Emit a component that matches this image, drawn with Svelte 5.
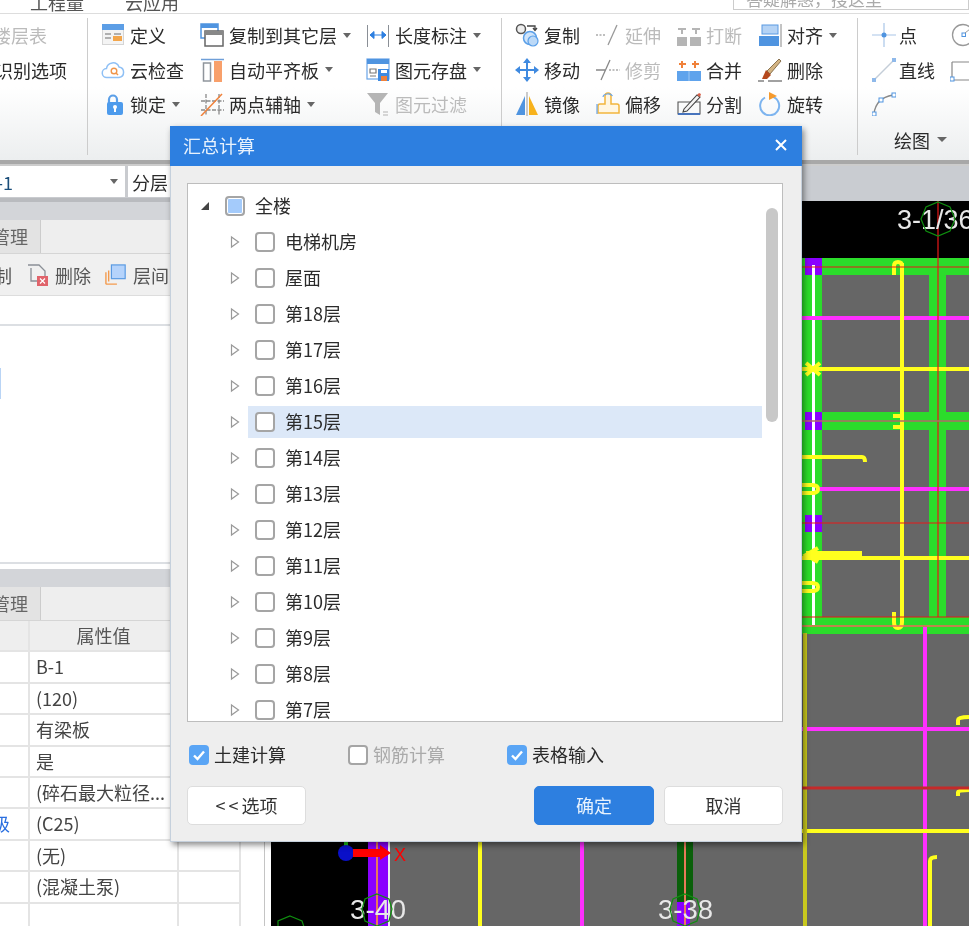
<script>
  const floors = ['电梯机房', '屋面']
  for (let i = 18; i >= 7; i--) floors.push(`第${i}层`)

  const rows = [
    ['', 'B-1'],
    ['', '(120)'],
    ['', '有梁板'],
    ['', '是'],
    ['', '(碎石最大粒径...'],
    ['级', '(C25)'],
    ['', '(无)'],
    ['', '(混凝土泵)'],
    ['', '']
  ]
</script>

{#snippet tick()}
  <svg viewBox="0 0 20 20" width="20" height="20"><path d="M5 10.5l3.5 3.5L15 6.5" fill="none" stroke="#fff" stroke-width="2.4"/></svg>
{/snippet}

<div class="page">
  <div class="menubar">
    <span class="m1">工程量</span>
    <span class="m2">云应用</span>
    <div class="search">答疑解惑，搜这里</div>
  </div>

  <div class="ribbon">
    <div class="group g1">
      <div class="clip off r1">楼层表</div>
      <div class="clip r2">识别选项</div>
    </div>

    <div class="group g2">
      <div class="item">
        <svg viewBox="0 0 24 24"><rect x="1.5" y="1.5" width="21" height="20" fill="#f4f4f4" stroke="#d5d5d5"/><rect x="1" y="1" width="22" height="6" fill="#5c9ee6"/><path d="M4 11h6M4 15h6M13 11h7" stroke="#999" stroke-width="1.5"/><rect x="12" y="13" width="9" height="5" fill="#f3a64c"/></svg>
        <span>定义</span>
      </div>
      <div class="item">
        <svg viewBox="0 0 24 24"><rect x="1" y="1" width="17" height="4" fill="#4f94e0"/><rect x="1" y="1" width="17" height="14" fill="none" stroke="#4f94e0" stroke-width="1.5"/><rect x="5" y="8" width="18" height="15" fill="#fff" stroke="#666" stroke-width="1.5"/><rect x="5" y="8" width="18" height="4" fill="#888"/></svg>
        <span>复制到其它层</span><i class="caret"></i>
      </div>
      <div class="item">
        <svg viewBox="0 0 24 24"><path d="M1.5 2v22M22.500 2v22" stroke="#8a8f96"/><path d="M4 12h16M4 12l4-3.500v7zM20 12l-4-3.500v7z" fill="#2d7fe0" stroke="#2d7fe0"/></svg>
        <span>长度标注</span><i class="caret"></i>
      </div>

      <div class="item">
        <svg viewBox="0 0 24 24"><path d="M6 19.500a4.500 4.500 0 0 1-.5-9A6.500 6.500 0 0 1 18 9a5.300 5.300 0 0 1 0 10.500z" fill="#fff" stroke="#8fc0f5" stroke-width="1.500"/><circle cx="13" cy="13" r="2.800" fill="none" stroke="#f0954a" stroke-width="1.400"/><path d="M15 15l2 2" stroke="#f0954a" stroke-width="1.400"/></svg>
        <span>云检查</span>
      </div>
      <div class="item">
        <svg viewBox="0 0 24 24"><path d="M1 1.500h23" stroke="#6f9fd8" stroke-width="1.500"/><rect x="3.500" y="5" width="7" height="18" fill="#fff" stroke="#8f959c" stroke-width="1.500"/><rect x="14" y="3" width="8" height="21" fill="#f8a06b"/></svg>
        <span>自动平齐板</span><i class="caret"></i>
      </div>
      <div class="item">
        <svg viewBox="0 0 24 24"><rect x="1" y="1" width="22" height="20" fill="#fff" stroke="#6aa5e8" stroke-width="1.200"/><rect x="1" y="1" width="22" height="5" fill="#4f94e0"/><path d="M4 11h6v4H4zM4 18h6" fill="none" stroke="#777" stroke-width="1.200"/><rect x="12" y="11" width="11" height="12" fill="#3f8ae0"/><rect x="15" y="18" width="6" height="5" fill="#f0813a"/><rect x="15" y="12" width="6" height="3" fill="#fff"/></svg>
        <span>图元存盘</span><i class="caret"></i>
      </div>

      <div class="item">
        <svg viewBox="0 0 24 24"><path d="M9 11V7.500a4 4 0 0 1 8 0V11" fill="none" stroke="#5b9fe8" stroke-width="2.200" transform="translate(-1 0)"/><rect x="6" y="10" width="16" height="13" rx="2" fill="#4d9bec"/><circle cx="14" cy="15" r="2" fill="#fff"/><rect x="13" y="15" width="2" height="5" fill="#fff"/></svg>
        <span>锁定</span><i class="caret"></i>
      </div>
      <div class="item">
        <svg viewBox="0 0 24 24"><path d="M6 2v22M19 2v22M1 9h23M1 18h23" stroke="#8a8a8a" stroke-width="1.300" stroke-dasharray="4 1.500"/><path d="M1 24L22 2" stroke="#f0813a" stroke-width="1.500"/></svg>
        <span>两点辅轴</span><i class="caret"></i>
      </div>
      <div class="item off">
        <svg viewBox="0 0 24 24"><path d="M1 1h21l-8 10v12l-5-3v-9z" fill="#b5b5b5"/><path d="M17 20h5M17 23h5" stroke="#c9c9c9" stroke-width="1.500"/></svg>
        <span>图元过滤</span>
      </div>
    </div>

    <div class="group g3">
      <div class="item">
        <svg viewBox="0 0 24 24"><circle cx="6" cy="6" r="4.500" fill="#eee" stroke="#555" stroke-width="1.500"/><circle cx="15" cy="15" r="6.500" fill="#cfe4fa" stroke="#5a9fe8" stroke-width="1.500"/><circle cx="18" cy="18" r="5" fill="#bcd9f7" stroke="#5a9fe8" stroke-width="1.200"/><path d="M12 3h8v4M18 5l2 2.500L22 5" fill="none" stroke="#444" stroke-width="1.300"/></svg>
        <span>复制</span>
      </div>
      <div class="item off">
        <svg viewBox="0 0 24 24"><path d="M0 12h10" stroke="#aaa" stroke-width="1.300" stroke-dasharray="2 1.500"/><path d="M12 22L21 2" stroke="#999" stroke-width="1.300"/></svg>
        <span>延伸</span>
      </div>
      <div class="item off">
        <svg viewBox="0 0 24 24"><rect x="0" y="14" width="10" height="9" fill="#b5b5b5"/><rect x="13" y="14" width="11" height="9" fill="#b5b5b5"/><path d="M5 5v6M19 5v6M1 6h8M15 6h8" stroke="#b5b5b5" stroke-width="2"/></svg>
        <span>打断</span>
      </div>
      <div class="item">
        <svg viewBox="0 0 24 24"><rect x="4" y="2" width="16" height="9" fill="#b5d3f5" stroke="#5a9ae2"/><rect x="1" y="13" width="20" height="10" fill="#4f94e0"/><path d="M23 1v23" stroke="#888"/></svg>
        <span>对齐</span><i class="caret"></i>
      </div>

      <div class="item">
        <svg viewBox="0 0 24 24"><path d="M12 5v14M5 12h14" stroke="#3f8ae0" stroke-width="2"/><path d="M12 0l4 5H8zM12 24l-4-5h8zM0 12l5-4v8zM24 12l-5 4V8z" fill="#3f8ae0"/></svg>
        <span>移动</span>
      </div>
      <div class="item off">
        <svg viewBox="0 0 24 24"><path d="M0 12h9M5 22L14 2" stroke="#888" stroke-width="1.300"/><path d="M13 12h11" stroke="#aaa" stroke-width="1.300" stroke-dasharray="2 1.500"/></svg>
        <span>修剪</span>
      </div>
      <div class="item">
        <svg viewBox="0 0 24 24"><rect x="0" y="13" width="24" height="10" fill="#5fa3ec"/><path d="M12 13v10" stroke="#9cc6f3"/><path d="M5 3v7M2 6h7M18 3v7M15 6h7" stroke="#f0813a" stroke-width="2"/></svg>
        <span>合并</span>
      </div>
      <div class="item">
        <svg viewBox="0 0 24 24"><path d="M9 13L21 1l2 2-11 13z" fill="#d4b483" stroke="#8a7350"/><path d="M8 12l5 5-4 4H4z" fill="#b5491d"/><path d="M0 23h6M10 23h14" stroke="#444" stroke-width="1.200"/></svg>
        <span>删除</span>
      </div>

      <div class="item">
        <svg viewBox="0 0 24 24"><path d="M10 4v19H1z" fill="#4f94e0"/><path d="M12 0v24" stroke="#999"/><path d="M14 4v19h9z" fill="#f7b21c"/></svg>
        <span>镜像</span>
      </div>
      <div class="item">
        <svg viewBox="0 0 24 24"><path d="M9 4a3 3 0 0 1 6 0v8h6a2 2 0 0 1 2 2v7H2v-7a2 2 0 0 1 2-2h5z" fill="#fff6e2" stroke="#f2b53c" stroke-width="1.500"/><path d="M7 5a5 3.500 0 0 1 9.500-1M1 12v10" fill="none" stroke="#6aa5e8" stroke-width="1.200"/></svg>
        <span>偏移</span>
      </div>
      <div class="item">
        <svg viewBox="0 0 24 24"><path d="M1 10h22v12H1z" fill="none" stroke="#555" stroke-width="1.100"/><path d="M1 22h22" stroke="#3d6fc0" stroke-width="1.800"/><path d="M7 17L20 3l3 2-13 14-4 1z" fill="#f4f4f4" stroke="#444" stroke-width="1.100"/><path d="M20 3l3 2 1-3-2-1z" fill="#d8604a"/></svg>
        <span>分割</span>
      </div>
      <div class="item">
        <svg viewBox="0 0 24 24"><path d="M7 5.500a9.500 9.500 0 1 0 8 -.6" fill="none" stroke="#7db4ef" stroke-width="2"/><path d="M11 0l8 4-8 4z" fill="#f59a2e"/></svg>
        <span>旋转</span>
      </div>
    </div>

    <div class="group g4">
      <div class="item short">
        <svg viewBox="0 0 24 24"><path d="M12 0v24M0 12h24" stroke="#a9c6e8" stroke-width="1.200"/><circle cx="12" cy="12" r="2.500" fill="#4f94e0"/></svg>
        <span>点</span>
      </div>
      <div class="item">
        <svg viewBox="0 0 24 24"><circle cx="13" cy="12" r="10.500" fill="none" stroke="#999" stroke-width="1.300"/><rect x="12" y="10" width="3.500" height="3.500" fill="#fff" stroke="#4f94e0"/><path d="M15 10l5-4" stroke="#999"/></svg>
      </div>
      <div class="item short">
        <svg viewBox="0 0 24 24"><path d="M2 22L22 2" stroke="#c4cdd8" stroke-width="1.400"/><rect x="0" y="20" width="4" height="4" fill="#8fb9ea"/><rect x="20" y="0" width="4" height="4" fill="#8fb9ea"/></svg>
        <span>直线</span>
      </div>
      <div class="item">
        <svg viewBox="0 0 24 24"><path d="M2 4h22M2 4v18h22" fill="none" stroke="#888" stroke-width="1.200"/><rect x="0" y="19" width="4" height="4" fill="#fff" stroke="#4f94e0"/></svg>
      </div>
      <div class="item short">
        <svg viewBox="0 0 24 24"><path d="M2 22C3 11 10 5 21 3" fill="none" stroke="#888" stroke-width="1.300"/><rect x="0" y="20" width="4" height="4" fill="#fff" stroke="#4f94e0"/><rect x="7" y="6" width="4" height="4" fill="#fff" stroke="#4f94e0"/><rect x="20" y="1" width="4" height="4" fill="#fff" stroke="#4f94e0"/></svg>
      </div>
      <div class="grouplabel">绘图<i class="caret big"></i></div>
    </div>
  </div>

  <div class="ribbonedge"></div>

  <div class="work">
    <div class="left">
      <div class="combos">
        <div class="combo first"><span>B-1</span><i class="caret"></i></div>
        <div class="combo second">分层</div>
      </div>
      <div class="band top"></div>
      <div class="tabs"><div class="tab">管理</div></div>
      <div class="tools">
        <span class="t-a">制</span>
        <svg class="t-b" viewBox="0 0 24 24" width="24" height="24"><path d="M2 2h11l6 6v10H5V5" fill="none" stroke="#8a8f96" stroke-width="1.300"/><rect x="11" y="13" width="11" height="10" fill="#e0636b"/><path d="M14 15.500l5 5M19 15.500l-5 5" stroke="#fff" stroke-width="1.200"/></svg>
        <span class="t-c">删除</span>
        <svg class="t-d" viewBox="0 0 24 24" width="22" height="24"><path d="M1 22V9M1 22h12M4 19V7" fill="none" stroke="#f39a4d" stroke-width="1.500"/><rect x="7" y="1" width="15" height="15" fill="#b5d3fb" stroke="#5a9ae2" stroke-width="1.300"/></svg>
        <span class="t-e">层间</span>
      </div>
      <div class="filter"></div>
      <div class="list"><i class="mark"></i></div>
      <div class="band low"></div>
      <div class="tabs second-tabs"><div class="tab">管理</div></div>
      <div class="table">
        <div class="cell head"></div><div class="cell head mid">属性值</div><div class="cell head"></div>
        {#each rows as r}
          <div class="cell name">{r[0]}</div><div class="cell">{r[1]}</div><div class="cell"></div>
        {/each}
      </div>
    </div>

    <div class="right">
      <div class="rightband"></div>
      <svg class="cad" viewBox="271 201 698 725" width="698" height="725">
        <rect x="271" y="201" width="698" height="725" fill="#000"/>
        <rect x="388" y="258" width="581" height="668" fill="#666"/>

        <!-- beams -->
        <g fill="#2bdc2b">
          <rect x="802" y="258" width="167" height="17"/>
          <rect x="802" y="412" width="167" height="18"/>
          <rect x="802" y="617" width="167" height="17"/>
          <rect x="802" y="258" width="20" height="370"/>
          <rect x="929" y="258" width="17" height="370"/>
        </g>
        <g fill="#8a00ff">
          <rect x="805" y="258" width="17" height="17"/>
          <rect x="805" y="412" width="17" height="18"/>
          <rect x="805" y="515" width="17" height="17"/>
          <rect x="368" y="842" width="20" height="84"/>
          <rect x="677" y="895" width="13" height="31"/>
        </g>
        <rect x="677" y="842" width="16" height="60" fill="#0a600a"/>
        <rect x="388" y="842" width="2" height="84" fill="#eee"/>
        <rect x="376" y="842" width="2" height="84" fill="#e87a5a"/>
        <rect x="684" y="842" width="2" height="84" fill="#e87a5a"/>
        <rect x="812" y="265" width="3" height="360" fill="#fff"/>

        <g fill="#ff30ff">
          <rect x="802" y="316" width="167" height="4"/>
          <rect x="818" y="487" width="151" height="4"/>
          <rect x="802" y="727" width="167" height="4"/>
          <rect x="923" y="627" width="4" height="299"/>
          <rect x="580" y="842" width="4" height="84"/>
        </g>

        <g fill="none" stroke="#ffff1e" stroke-width="4">
          <path d="M802 369H969M902 263V622M802 558H969M802 831H969M480 842V926"/>
          <path d="M894 275V266Q894 262 898 262Q902 262 902 266"/>
          <path d="M894 612V622Q894 628 898 628Q902 628 902 622"/>
          <path d="M802 457H862Q865 457 865 462"/>
          <path d="M802 485H812Q818 485 818 489Q818 493 812 493H802"/>
          <path d="M802 586H812Q818 586 818 590Q818 594 812 594H802" transform="translate(0 -3)"/>
          <path d="M806 363L820 375M820 363L806 375"/>
          <path d="M893 416H902M893 427H902"/>
          <path d="M805 633V926" stroke="#c8c81e"/>
          <path d="M930 926V861Q930 857 937 857"/>
          <path d="M958 725V720Q958 717 969 717"/>
          <path d="M958 796V792Q958 790 969 790"/>
        </g>
        <path d="M806 555H862" stroke="#ffff1e" stroke-width="8" fill="none"/>
        <path d="M818 548L806 555L818 562" stroke="#ffff1e" stroke-width="4" fill="none"/>

        <g stroke="#e81818" stroke-width="1.200" fill="none">
          <path d="M802 267H969M802 523H969M802 617H969M938 201V617"/>
          <path d="M802 626H969" stroke="#f06a5a" stroke-width="1.500"/>
          <path d="M802 421H969" stroke="#b06a6a" stroke-width="1.500"/>
          <path d="M802 788H969" stroke="#c42a2a" stroke-width="3"/>
        </g>

        <!-- axis labels -->
        <g fill="#e8e8e8" font-family="'Liberation Sans', sans-serif" font-size="27">
          <text x="897" y="229">3-1/36</text>
          <text x="350" y="919" textLength="56" lengthAdjust="spacingAndGlyphs">3-40</text>
          <text x="658" y="919" textLength="55" lengthAdjust="spacingAndGlyphs">3-38</text>
        </g>
        <g fill="none" stroke="#0f8f0f" stroke-width="1.200">
          <polygon points="938,202 950,207 955,219 950,231 938,236 926,231 921,219 926,207"/>
          <polygon points="377,894 389,899 392,909 389,921 377,926 365,921 362,909 365,899"/>
          <polygon points="685,894 697,899 700,909 697,921 685,926 673,921 670,909 673,899"/>
          <polygon points="290,916 302,921 306,933 278,933 278,921"/>
        </g>

        <!-- origin -->
        <rect x="344" y="842" width="4" height="6" fill="#19c419"/>
        <circle cx="346" cy="853" r="8" fill="#0a10c8"/>
        <path d="M353 849H380V845L391 853L380 860V857H353z" fill="#f00"/>
        <text x="394" y="861" fill="#f00" font-family="'Liberation Sans', sans-serif" font-size="18">X</text>
      </svg>
    </div>
  </div>

  <div class="dialog">
    <div class="dhead">
      <span>汇总计算</span>
      <svg viewBox="0 0 12 12" width="12" height="12"><path d="M1 1l10 10M11 1L1 11" stroke="#fff" stroke-width="2"/></svg>
    </div>
    <div class="dbody">
      <div class="tree">
        <div class="node root">
          <svg class="arrow" viewBox="0 0 10 10" width="10" height="10"><path d="M9 1v8H1z" fill="#444"/></svg>
          <div class="nodebody">
            <i class="box some"></i>
            <span>全楼</span>
          </div>
        </div>
        {#each floors as f}
          <div class="node">
            <svg class="arrow" viewBox="0 0 10 14" width="10" height="14"><path d="M1.500 2l7 5-7 5z" fill="#fff" stroke="#999" stroke-width="1.200"/></svg>
            <div class="nodebody" class:hot={f === '第15层'}>
              <i class="box"></i>
              <span>{f}</span>
            </div>
          </div>
        {/each}
        <div class="scroll"></div>
      </div>

      <div class="checks">
        <label class="chk c1"><i class="box on">{@render tick()}</i><span>土建计算</span></label>
        <label class="chk c2 dim"><i class="box"></i><span>钢筋计算</span></label>
        <label class="chk c3"><i class="box on">{@render tick()}</i><span>表格输入</span></label>
      </div>

      <div class="btns">
        <button class="btn opt"><span class="lt">&lt;&lt;</span>选项</button>
        <button class="btn primary">确定</button>
        <button class="btn cancel">取消</button>
      </div>
    </div>
  </div>
</div>

<style>
  :global(body) {
    margin: 0;
    background: #fff;
  }

  .page {
    position: relative;
    width: 969px;
    height: 926px;
    overflow: hidden;
    background: #fff;
    color: #2b2b2b;
    font-family: "Noto Sans CJK SC", "Noto Sans", sans-serif;
    font-size: 18px;
    line-height: 24px;
    filter: blur(0.35px);
  }

  .menubar {
    height: 13px;
    display: flex;
    overflow: hidden;
    border-bottom: 1px solid #ddd;
    color: #555;
  }
  .menubar span {
    margin-top: -10px;
  }
  .m1 {
    margin-left: 30px;
  }
  .m2 {
    margin-left: 41px;
  }
  .search {
    box-sizing: border-box;
    margin: -14px 0 0 auto;
    width: 236px;
    height: 24px;
    padding-left: 12px;
    border: 1px solid #ccc;
    color: #aaa;
    font-size: 17px;
  }

  .ribbon {
    height: 146px;
    display: flex;
    background: linear-gradient(#fff 50%, #eceeef);
  }
  .group {
    box-sizing: border-box;
    height: 137px;
    margin-top: 4px;
    border-right: 1px solid #ccc;
    display: grid;
    grid-auto-rows: 34.500px;
    align-items: center;
  }
  .g1 {
    width: 88px;
    grid-template-columns: 87px;
    overflow: hidden;
  }
  .clip {
    white-space: nowrap;
    justify-self: end;
  }
  .r1 {
    margin-right: 40px;
  }
  .r2 {
    margin-right: 20px;
  }
  .off,
  .off span {
    color: #bbb;
  }
  .g2 {
    width: 414px;
    padding-left: 13px;
    grid-template-columns: 99px 166px auto;
  }
  .g3 {
    width: 356px;
    padding-left: 13px;
    grid-template-columns: 81px 81px 81px auto;
  }
  .g4 {
    flex: 1;
    border-right: 0;
    padding-left: 14px;
    grid-template-columns: 78px auto;
    overflow: hidden;
  }
  .grouplabel {
    grid-column: 1 / 3;
    margin: 2px 0 0 22px;
    display: flex;
    align-items: center;
  }
  .item {
    display: flex;
    align-items: center;
    white-space: nowrap;
  }
  .item svg {
    width: 24px;
    height: 24px;
    flex: none;
    margin-right: 5px;
  }
  .short svg {
    margin-right: 3px;
  }
  .caret {
    width: 0;
    height: 0;
    margin-left: 6px;
    border: 4.500px solid transparent;
    border-top: 5px solid #666;
    border-bottom: 0;
  }
  .caret.big {
    margin-left: 7px;
    border-width: 5px;
    border-bottom: 0;
  }

  .ribbonedge {
    height: 6px;
    box-sizing: border-box;
    border-top: 4px solid #a8a8a8;
    background: #ccc;
  }

  .work {
    display: flex;
    height: 760px;
  }
  .left {
    box-sizing: border-box;
    width: 265px;
    flex: none;
    border-right: 1px solid #c4c4c4;
  }
  .combos {
    height: 32px;
    display: flex;
    gap: 3px;
    background: #c9cbcf;
  }
  .combo {
    height: 31px;
    background: #fff;
    display: flex;
    align-items: center;
  }
  .first {
    width: 125px;
    justify-content: space-between;
    padding-right: 7px;
    box-sizing: border-box;
    color: #1b4e7a;
  }
  .first span {
    margin-left: -15px;
  }
  .second {
    flex: 1;
    padding-left: 4px;
  }
  .band {
    background: #d3d5d9;
    border-top: 4px solid #b9bbbf;
    box-sizing: border-box;
  }
  .band.top {
    height: 22px;
  }
  .band.low {
    height: 18px;
    border-top: 0;
  }
  .tabs {
    height: 34px;
    box-sizing: border-box;
    background: #eee;
    border-bottom: 1px solid #d5d5d5;
  }
  .tab {
    box-sizing: border-box;
    width: 41px;
    height: 33px;
    background: #e3e3e3;
    border-right: 1px solid #ccc;
    color: #666;
    line-height: 33px;
    display: flex;
    justify-content: flex-end;
    overflow: hidden;
    white-space: nowrap;
    padding-right: 12px;
  }
  .tools {
    box-sizing: border-box;
    height: 42px;
    background: #f0f0f0;
    border-bottom: 1px solid #ddd;
    display: flex;
    align-items: center;
    color: #555;
    white-space: nowrap;
    overflow: hidden;
  }
  .t-a {
    width: 12px;
    overflow: hidden;
    direction: rtl;
  }
  .t-b {
    margin-left: 14px;
  }
  .t-c {
    margin-left: 5px;
  }
  .t-d {
    margin-left: 14px;
  }
  .t-e {
    margin-left: 6px;
  }
  .filter {
    height: 28px;
    border-bottom: 2px solid #dcdfe3;
  }
  .list {
    position: relative;
    height: 194px;
    border-bottom: 2px solid #dcdfe3;
    margin-bottom: 5px;
  }
  .mark {
    display: block;
    width: 1px;
    height: 31px;
    margin-top: 42px;
    background: #b9d4f5;
  }
  .table {
    display: grid;
    width: 241px;
    grid-template-columns: 30px 149px 62px;
    grid-auto-rows: 31.400px;
    font-size: 18px;
  }
  .cell {
    box-sizing: border-box;
    border-right: 2px solid #e4e4e4;
    border-bottom: 2px solid #e4e4e4;
    padding-left: 6px;
    line-height: 29px;
    white-space: nowrap;
    overflow: hidden;
    color: #444;
  }
  .head {
    background: #eee;
    color: #555;
  }
  .mid {
    text-align: center;
    padding: 0;
  }
  .name {
    color: #2a6fe0;
    padding: 0 18px 0 0;
    direction: rtl;
  }

  .right {
    flex: 1;
    margin-left: 6px;
    min-width: 0;
  }
  .rightband {
    height: 35px;
    background: #c9ccd1;
  }
  .cad {
    display: block;
  }

  .dialog {
    position: absolute;
    left: 170px;
    top: 126px;
    width: 632px;
    height: 716px;
    background: #eee;
    box-shadow: inset 1px 0 #c5d0dc, inset -1px 0 #c5d0dc, inset 0 -1px #c5d0dc, 2px 3px 6px rgba(0, 0, 0, 0.45);
    display: flex;
    flex-direction: column;
  }
  .dhead {
    box-sizing: border-box;
    height: 40px;
    flex: none;
    background: #2d7fe0;
    color: #e8f2fd;
    padding: 0 15px 2px 13px;
    display: flex;
    align-items: center;
    justify-content: space-between;
  }
  .dbody {
    flex: 1;
    padding: 17px 19px 0 17px;
  }
  .tree {
    position: relative;
    box-sizing: border-box;
    height: 539px;
    padding-top: 4px;
    background: #fff;
    border: 1px solid #bdbdbd;
    overflow: hidden;
  }
  .node {
    height: 36px;
    display: flex;
    align-items: center;
    padding-left: 42px;
  }
  .arrow {
    flex: none;
    width: 10px;
  }
  .nodebody {
    width: 514px;
    height: 32px;
    margin-left: 8px;
    padding-left: 7px;
    box-sizing: border-box;
    display: flex;
    align-items: center;
    gap: 10px;
  }
  .nodebody span,
  .chk span {
    margin-top: -2px;
  }
  .hot {
    background: #dce8f8;
  }
  .root {
    padding-left: 12px;
  }
  .box {
    box-sizing: border-box;
    display: block;
    flex: none;
    width: 20px;
    height: 20px;
    border: 2px solid #a5a5a5;
    border-radius: 4px;
    background: #fff;
  }
  .box.some {
    background: #a4cbfb;
    box-shadow: inset 0 0 0 1px #fff;
  }
  .box.on {
    background: #5aa5f5;
    border: 0;
  }
  .box svg {
    display: block;
  }
  .scroll {
    position: absolute;
    left: 578px;
    top: 24px;
    width: 12px;
    height: 214px;
    border-radius: 6px;
    background: #c8c8c8;
  }
  .checks {
    height: 40px;
    margin-top: 13px;
    display: flex;
    align-items: center;
    padding-left: 2px;
  }
  .chk {
    display: flex;
    align-items: center;
    gap: 5px;
  }
  .c2,
  .c3 {
    margin-left: 62px;
  }
  .dim {
    color: #aaa;
  }
  .btns {
    margin-top: 11px;
    display: flex;
  }
  .btn {
    box-sizing: border-box;
    height: 39px;
    background: #fff;
    border: 1px solid #ddd;
    border-radius: 5px;
    font: inherit;
    color: #333;
    padding: 0 0 2px;
  }
  .lt {
    letter-spacing: 3px;
  }
  .opt {
    width: 119px;
  }
  .primary {
    width: 120px;
    margin-left: auto;
    background: #2d7fe0;
    border-color: #2d7fe0;
    color: #e8f2fd;
  }
  .cancel {
    width: 119px;
    margin-left: 10px;
  }
</style>
